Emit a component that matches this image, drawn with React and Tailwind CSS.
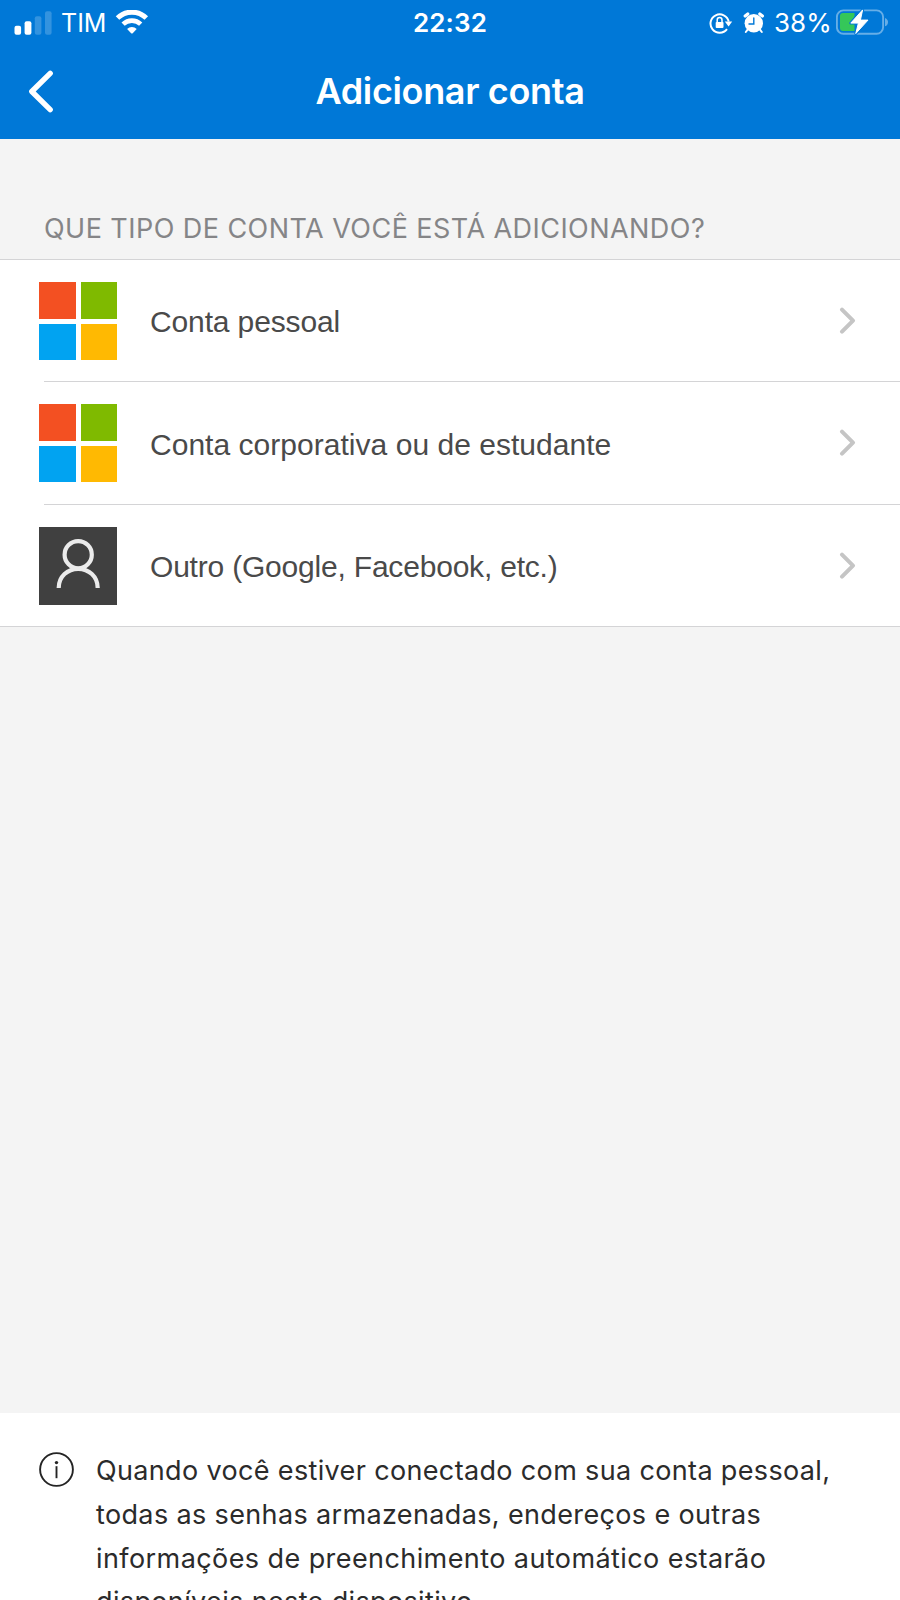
const accounts = [
  { label: 'Conta pessoal', icon: 'microsoft', height: 'h-[122px]', text: 'tracking-[-0.13px] pt-0' },
  { label: 'Conta corporativa ou de estudante', icon: 'microsoft', height: 'h-[123px]', text: 'tracking-[0.03px] pt-[2px]' },
  { label: 'Outro (Google, Facebook, etc.)', icon: 'person', height: 'h-[121px]', text: 'tracking-[-0.2px] pt-[2px]' },
];

const infoLines = [
  { text: 'Quando você estiver conectado com sua conta pessoal,', tracking: 'tracking-[0.35px]' },
  { text: 'todas as senhas armazenadas, endereços e outras', tracking: 'tracking-[0.36px]' },
  { text: 'informações de preenchimento automático estarão', tracking: 'tracking-[0.42px]' },
  { text: 'disponíveis neste dispositivo.', tracking: 'tracking-[0.36px]' },
];

function SignalIcon() {
  return (
    <svg width="38" height="24" viewBox="0 0 38 24" fill="#fff">
      <rect x="0.5" y="14.8" width="6.6" height="9" rx="2" />
      <rect x="10.6" y="10.2" width="6.8" height="13.6" rx="2" />
      <rect x="20.8" y="5.2" width="6.6" height="18.6" rx="2" opacity="0.2" />
      <rect x="31" y="0.2" width="6.6" height="23.6" rx="2" opacity="0.2" />
    </svg>
  );
}

function WifiIcon() {
  return (
    <svg width="34" height="26" viewBox="0 0 34 26" fill="none" stroke="#fff">
      <path d="M2.5 8 A20.6 20.6 0 0 1 31.3 8" strokeWidth="5" />
      <path d="M8.1 14.2 A12.6 12.6 0 0 1 25.7 14.2" strokeWidth="4.6" />
      <path d="M12.1 19 A6.8 6.8 0 0 1 21.7 19 L17.7 23.2 Q16.9 23.8 16.1 23.2 Z" fill="#fff" stroke="none" />
    </svg>
  );
}

function RotationLockIcon() {
  return (
    <svg width="24" height="22" viewBox="0 0 24 22" fill="none" stroke="#fff">
      <path d="M18 17.2 A9.2 9.2 0 1 1 19.7 9.6" strokeWidth="2" />
      <path d="M15.8 9.4 H23.2 L19.6 14.4 Z" fill="#fff" stroke="none" />
      <rect x="6.7" y="9.9" width="7.8" height="6" rx="0.9" fill="#fff" stroke="none" />
      <path d="M8.2 10.4 V8 a2.4 2.4 0 0 1 4.8 0 V10.4" strokeWidth="1.5" />
    </svg>
  );
}

function AlarmIcon() {
  return (
    <svg width="22" height="22" viewBox="0 0 22 22" fill="none" stroke="#fff" strokeLinecap="round">
      <circle cx="10.8" cy="11.2" r="9.2" fill="#fff" stroke="none" />
      <path d="M2.2 4 L4.8 1.9" strokeWidth="3.2" />
      <path d="M19.4 4 L16.8 1.9" strokeWidth="3.2" />
      <path d="M4.8 17.4 L2.8 20 M16.8 17.4 L18.8 20" strokeWidth="2" />
      <path d="M10.8 6 V12 H6" stroke="#0078d7" strokeWidth="1.4" />
    </svg>
  );
}

function BatteryIcon() {
  return (
    <svg width="54" height="27" viewBox="0 0 54 27" fill="none">
      <rect x="0.9" y="1.4" width="46.2" height="23.4" rx="6.5" stroke="#66aee7" strokeWidth="1.9" />
      <path d="M49 8.9 C53 10.1 53 16.1 49 17.3 Z" fill="#66aee7" />
      <path d="M7 4.1 H18.5 V22.1 H7 Q4 22.1 4 19.1 V7.1 Q4 4.1 7 4.1 Z" fill="#35c759" />
      <path d="M26.6 0.9 L14.8 14.1 H22.4 L19.8 24.5 L32 11.1 H24.4 Z" fill="#fff" stroke="#0078d7" strokeWidth="3" strokeLinejoin="round" />
      <path d="M26.6 0.9 L14.8 14.1 H22.4 L19.8 24.5 L32 11.1 H24.4 Z" fill="#fff" stroke="#fff" strokeWidth="1" strokeLinejoin="round" />
    </svg>
  );
}

function MicrosoftLogo() {
  return (
    <div className="grid h-[78px] w-[78px] grid-cols-2 gap-[5px]">
      <div className="bg-[#f35022]" />
      <div className="bg-[#7fba00]" />
      <div className="bg-[#01a3f1]" />
      <div className="bg-[#ffb902]" />
    </div>
  );
}

function PersonIcon() {
  return (
    <svg width="78" height="78" viewBox="0 0 78 78" fill="none" stroke="#ebebeb" strokeWidth="4.2">
      <rect width="78" height="78" fill="#404040" stroke="none" />
      <circle cx="39.2" cy="27.7" r="13.6" />
      <path d="M19.7 61 C19.7 49.5 28.7 41.8 39.2 41.8 C49.7 41.8 58.7 49.5 58.7 61" />
    </svg>
  );
}

function ChevronRight() {
  return (
    <svg width="18" height="28" viewBox="0 0 18 28" fill="none" stroke="#c5c5c5" strokeWidth="4" strokeLinecap="round" strokeLinejoin="round">
      <path d="M3 2.6 L14 13.6 L3 24.6" />
    </svg>
  );
}

function InfoIcon() {
  return (
    <svg width="35" height="35" viewBox="0 0 35 35" fill="none" stroke="#242424" strokeWidth="1.9">
      <circle cx="17.5" cy="17.5" r="16.4" />
      <path d="M17.5 14.2 V26.2" />
      <circle cx="17.5" cy="10.6" r="1.7" fill="#242424" stroke="none" />
    </svg>
  );
}

export default function App() {
  return (
    <div className="flex h-[1600px] w-[900px] flex-col overflow-hidden bg-[#f4f4f4] font-['Inter',sans-serif]">
      <header className="h-[139px] shrink-0 bg-[#0078d7] text-white">
        <div className="grid h-[45px] grid-cols-[1fr_auto_1fr] items-center">
          <div className="flex items-center pl-[14px]">
            <SignalIcon />
            <span className="ml-[9px] w-[46px] pt-[1px] text-[25px] leading-[44px]">TIM</span>
            <span className="ml-[8px]"><WifiIcon /></span>
          </div>
          <span className="text-[26px] leading-[45px] font-semibold tracking-[0.15px]">22:32</span>
          <div className="flex items-center justify-end pr-[10px]">
            <RotationLockIcon />
            <span className="ml-[10px]"><AlarmIcon /></span>
            <span className="ml-[9px] w-[58px] text-[26px] leading-[45px]">38%</span>
            <span className="ml-[4px]"><BatteryIcon /></span>
          </div>
        </div>
        <div className="grid h-[94px] grid-cols-[1fr_auto_1fr] items-center">
          <button className="pl-[27px]">
            <svg width="28" height="46" viewBox="0 0 28 46" fill="none" stroke="#fff" strokeWidth="5.4" strokeLinecap="round" strokeLinejoin="round">
              <path d="M23.2 4.4 L4.8 22.5 L23.2 40.6" />
            </svg>
          </button>
          <h1 className="pb-[2px] text-[36px] leading-[92px] font-semibold tracking-[-0.35px]">Adicionar conta</h1>
        </div>
      </header>

      <main className="flex-1">
        <h2 className="flex h-[120px] items-end pb-[10px] pl-[44px] text-[27px] leading-[40px] tracking-[0.45px] whitespace-nowrap text-[#858587]">
          QUE TIPO DE CONTA VOCÊ ESTÁ ADICIONANDO?
        </h2>
        <ul className="border-y border-[#d4d4d6] bg-white">
          {accounts.map((a, i) => (
            <li key={a.label} className={a.height}>
              <div className={`flex h-full items-center pl-[39px] ${i === 1 ? 'pb-[1px]' : ''}`}>
                {a.icon === 'microsoft' ? <MicrosoftLogo /> : <PersonIcon />}
                <span className={`ml-[33px] flex-1 font-['Liberation_Sans',sans-serif] text-[30px] text-[#4a4a4a] ${a.text}`}>
                  {a.label}
                </span>
                <span className="mr-[43px]"><ChevronRight /></span>
              </div>
              {i < accounts.length - 1 && <div className="-mt-px ml-[44px] h-px bg-[#d4d4d6]" />}
            </li>
          ))}
        </ul>
      </main>

      <footer className="flex h-[187px] shrink-0 items-start bg-white pt-[36px] pl-[39px]">
        <span className="mt-[3px]"><InfoIcon /></span>
        <p className="ml-[22px] text-[27px] leading-[43.8px] whitespace-nowrap text-[#2b2b2b]">
          {infoLines.map((l) => (
            <span key={l.text} className={`block ${l.tracking}`}>{l.text}</span>
          ))}
        </p>
      </footer>
    </div>
  );
}
